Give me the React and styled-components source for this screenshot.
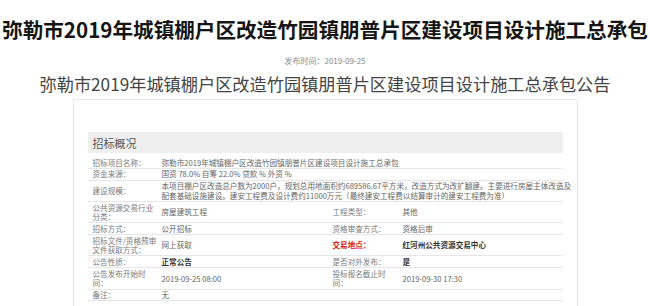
import React from "react";
import styled, { createGlobalStyle } from "styled-components";

const Global = createGlobalStyle`
  html, body {
    margin: 0;
    padding: 0;
    background: #fff;
  }
  body {
    font-family: "Noto Sans CJK SC", "Noto Sans", sans-serif;
  }
`;

const Page = styled.div`
  width: 650px;
  height: 306px;
  overflow: hidden;
  display: flex;
  flex-direction: column;
  align-items: center;
`;

const Title = styled.h1`
  margin: 14px 0 0;
  font-size: 20.6px;
  line-height: 30px;
  font-weight: 700;
  color: #151515;
  white-space: nowrap;
`;

const PubDate = styled.div`
  margin-top: 12px;
  font-size: 8px;
  line-height: 10px;
  color: #8a8a8a;
`;

const SubTitle = styled.h2`
  margin: 7px 0 0;
  font-size: 17.2px;
  line-height: 22px;
  font-weight: 400;
  color: #444;
  white-space: nowrap;
`;

const Card = styled.section`
  margin-top: 4px;
  width: 505px;
  box-sizing: border-box;
  border: 1px solid #e8e8e8;
  padding: 32px 14px 40px;
`;

const SectionHead = styled.div`
  height: 21px;
  background: #efefef;
  display: flex;
  align-items: center;
  padding-left: 5px;
  font-size: 11px;
  color: #555;
`;

const Grid = styled.div`
  margin-top: 4px;
  display: grid;
  grid-template-columns: 69px 171px 70px 1fr;
  font-size: 7.6px;
  line-height: 9.6px;
`;

const Cell = styled.div`
  grid-column: ${(p) => (p.$span ? `span ${p.$span}` : "auto")};
  display: flex;
  align-items: center;
  padding: 0.6px 0 0.6px 5px;
  border-bottom: 1px solid #e6e6e6;
  white-space: nowrap;
`;

const Label = styled(Cell)`
  color: ${(p) => (p.$red ? "#e02020" : "#7a7a7a")};
  font-weight: ${(p) => (p.$red ? 700 : 400)};
`;

const Value = styled(Cell)`
  color: ${(p) => (p.$bold ? "#333" : "#666")};
  font-weight: ${(p) => (p.$bold ? 700 : 400)};
`;

export default function App() {
  return (
    <Page>
      <Global />
      <Title>弥勒市2019年城镇棚户区改造竹园镇朋普片区建设项目设计施工总承包</Title>
      <PubDate>发布时间：2019-09-25</PubDate>
      <SubTitle>弥勒市2019年城镇棚户区改造竹园镇朋普片区建设项目设计施工总承包公告</SubTitle>
      <Card>
        <SectionHead>招标概况</SectionHead>
        <Grid>
          <Label>招标项目名称：</Label>
          <Value $span={3}>弥勒市2019年城镇棚户区改造竹园镇朋普片区建设项目设计施工总承包</Value>

          <Label>资金来源：</Label>
          <Value $span={3}>国资 78.0% 自筹 22.0% 贷款 % 外资 %</Value>

          <Label>建设规模：</Label>
          <Value $span={3}>
            本项目棚户区改造总户数为2000户，规划总用地面积约689586.67平方米，改造方式为改扩翻建。主要进行房屋主体改造及
            <br />
            配套基础设施建设。建安工程费及设计费约11000万元（最终建安工程费以结算审计的建安工程费为准）
          </Value>

          <Label>
            公共资源交易行业
            <br />
            分类：
          </Label>
          <Value>房屋建筑工程</Value>
          <Label>工程类型：</Label>
          <Value>其他</Value>

          <Label>招标方式：</Label>
          <Value>公开招标</Value>
          <Label>资格审查方式：</Label>
          <Value>资格后审</Value>

          <Label>
            招标文件/资格预审
            <br />
            文件获取方式：
          </Label>
          <Value>网上获取</Value>
          <Label $red>交易地点：</Label>
          <Value $bold>红河州公共资源交易中心</Value>

          <Label>公告性质：</Label>
          <Value $bold>正常公告</Value>
          <Label>是否对外发布：</Label>
          <Value $bold>是</Value>

          <Label>
            公告发布开始时
            <br />
            间：
          </Label>
          <Value>2019-09-25 08:00</Value>
          <Label>
            投标报名截止时
            <br />
            间：
          </Label>
          <Value>2019-09-30 17:30</Value>

          <Label>备注：</Label>
          <Value $span={3}>无</Value>
        </Grid>
      </Card>
    </Page>
  );
}
